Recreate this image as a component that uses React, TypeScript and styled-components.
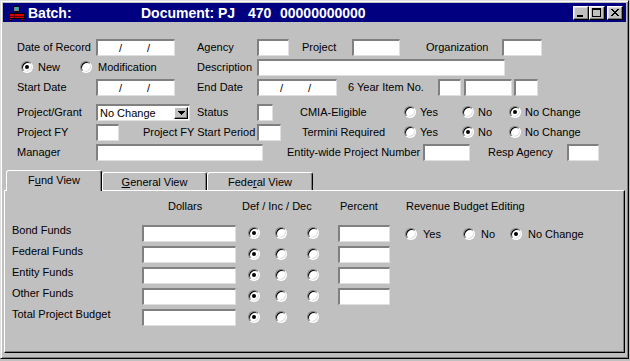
import React from 'react';
import styled, { createGlobalStyle, css } from 'styled-components';

const GlobalStyle = createGlobalStyle`
  html, body {
    margin: 0;
    padding: 0;
    background: #c0c0c0;
  }
  body {
    font-family: "Liberation Sans", Arial, sans-serif;
    font-size: 11px;
    color: #000;
  }
`;

const Window = styled.div`
  box-sizing: border-box;
  width: 629px;
  height: 359px;
  background: #c0c0c0;
  border: 1px solid;
  border-color: #dfdfdf #000 #000 #dfdfdf;
  box-shadow: inset 1px 1px #fff, inset -1px -1px #808080;
  padding: 2px;
  display: flex;
  flex-direction: column;
`;

const TitleBar = styled.div`
  height: 19px;
  flex: none;
  background: #000080;
  color: #fff;
  display: flex;
  align-items: center;
  padding: 0 3px 0 3px;
`;

const TitleSeg = styled.span<{ $w?: number }>`
  font-size: 14px;
  font-weight: bold;
  white-space: nowrap;
  width: ${({ $w }) => ($w ? `${$w}px` : 'auto')};
  flex: none;
`;

const TitleButtons = styled.div`
  margin-left: auto;
  display: flex;
  align-items: center;
`;

const WinButton = styled.span<{ $ml?: number }>`
  box-sizing: border-box;
  width: 16px;
  height: 14px;
  margin-left: ${({ $ml }) => $ml ?? 0}px;
  background: #c0c0c0;
  border: 1px solid;
  border-color: #fff #000 #000 #fff;
  box-shadow: inset -1px -1px #808080, inset 1px 1px #dfdfdf;
  display: flex;
  svg {
    display: block;
  }
`;

const Form = styled.div`
  padding: 15px 0 0 14px;
`;

const Row = styled.div<{ $mt?: number }>`
  display: flex;
  align-items: center;
  height: 20px;
  margin-top: ${({ $mt }) => $mt ?? 0}px;
`;

const Label = styled.span<{ $w: number; $ml?: number; $mb?: number }>`
  flex: none;
  width: ${({ $w }) => $w}px;
  margin-left: ${({ $ml }) => $ml ?? 0}px;
  margin-bottom: ${({ $mb }) => $mb ?? 0}px;
  white-space: nowrap;
`;

const Field = styled.div<{ $w: number; $ml?: number }>`
  box-sizing: border-box;
  flex: none;
  width: ${({ $w }) => $w}px;
  height: 17px;
  margin-left: ${({ $ml }) => $ml ?? 0}px;
  background: #fff;
  border-top: 2px solid #808080;
  border-left: 2px solid #808080;
  border-right: 1px solid #dfdfdf;
  border-bottom: 1px solid #dfdfdf;
  display: flex;
  align-items: center;
  white-space: nowrap;
`;

const Slash = styled.span<{ $ml: number }>`
  margin-left: ${({ $ml }) => $ml}px;
`;

const SelectText = styled.span`
  padding-left: 2px;
`;

const DropButton = styled.span`
  box-sizing: border-box;
  margin-left: auto;
  margin-right: 1px;
  width: 14px;
  height: 12px;
  background: #c0c0c0;
  border: 1px solid;
  border-color: #fff #000 #000 #fff;
  box-shadow: inset -1px -1px #808080;
  display: flex;
  align-items: center;
  justify-content: center;
`;

const RadioDot = styled.span<{ $on?: boolean }>`
  box-sizing: border-box;
  position: relative;
  flex: none;
  width: 12px;
  height: 12px;
  border-radius: 50%;
  background: #fff;
  border: 1px solid;
  border-color: #808080 #fff #fff #808080;
  box-shadow: inset 1px 1px #000, inset -1px -1px #dfdfdf;
  ${({ $on }) =>
    $on &&
    css`
      &::after {
        content: '';
        position: absolute;
        left: 3px;
        top: 3px;
        width: 4px;
        height: 4px;
        border-radius: 50%;
        background: #000;
      }
    `}
`;

const RadioOption = styled.span<{ $w?: number; $ml?: number; $gap?: number; $mb?: number }>`
  flex: none;
  display: flex;
  align-items: center;
  gap: ${({ $gap }) => $gap ?? 6}px;
  width: ${({ $w }) => ($w ? `${$w}px` : 'auto')};
  margin-left: ${({ $ml }) => $ml ?? 0}px;
  margin-bottom: ${({ $mb }) => $mb ?? 0}px;
  white-space: nowrap;
`;

const TabSection = styled.div`
  flex: 1;
  display: flex;
  flex-direction: column;
  margin: 8px 1px 3px 1px;
`;

const TabStrip = styled.div`
  display: flex;
  align-items: flex-end;
  height: 20px;
  padding-left: 2px;
  position: relative;
  z-index: 1;
`;

const Tab = styled.div<{ $w: number; $active?: boolean }>`
  box-sizing: border-box;
  flex: none;
  width: ${({ $w }) => $w}px;
  height: ${({ $active }) => ($active ? 21 : 18)}px;
  margin-bottom: ${({ $active }) => ($active ? -1 : 0)}px;
  background: #c0c0c0;
  border-top: 1px solid #fff;
  border-left: 1px solid #fff;
  border-right: 1px solid #000;
  border-radius: 3px 3px 0 0;
  box-shadow: inset -1px 0 #808080;
  display: flex;
  align-items: center;
  justify-content: center;
  padding-bottom: ${({ $active }) => ($active ? 2 : 0)}px;
`;

const Panel = styled.div`
  flex: 1;
  background: #c0c0c0;
  border-top: 1px solid #fff;
  border-left: 1px solid #fff;
  border-right: 1px solid #000;
  border-bottom: 1px solid #000;
  box-shadow: inset -1px -1px #808080;
  padding: 7px 0 0 7px;
`;

const PanelHeader = styled.div`
  display: flex;
  align-items: center;
  height: 16px;
  margin-bottom: 9px;
`;

const HeadCell = styled.span<{ $w?: number }>`
  flex: none;
  width: ${({ $w }) => ($w ? `${$w}px` : 'auto')};
  white-space: nowrap;
`;

const FundRow = styled.div`
  display: flex;
  align-items: center;
  height: 21px;
`;

function AppIcon() {
  return (
    <svg width="16" height="16" viewBox="0 0 16 16" shapeRendering="crispEdges" style={{ marginLeft: 3, flex: 'none' }}>
      <rect x="4" y="1" width="7" height="6" fill="#000" />
      <rect x="5" y="2" width="5" height="4" fill="#808080" />
      <rect x="6" y="2" width="3" height="3" fill="#00c0c0" />
      <rect x="6" y="7" width="3" height="1" fill="#000" />
      <rect x="0" y="8" width="16" height="6" fill="#000" />
      <rect x="1" y="9" width="14" height="4" fill="#e00000" />
      <rect x="1" y="11" width="14" height="1" fill="#600000" />
      <rect x="5" y="9" width="1" height="4" fill="#600000" />
      <rect x="10" y="9" width="1" height="4" fill="#600000" />
      <rect x="1" y="14" width="2" height="2" fill="#000" />
      <rect x="13" y="14" width="2" height="2" fill="#000" />
      <rect x="1" y="14" width="1" height="1" fill="#e00000" />
      <rect x="13" y="14" width="1" height="1" fill="#e00000" />
    </svg>
  );
}

function MinIcon() {
  return (
    <svg width="14" height="12" viewBox="0 0 14 12" shapeRendering="crispEdges">
      <rect x="3" y="8" width="6" height="2" fill="#000" />
    </svg>
  );
}

function MaxIcon() {
  return (
    <svg width="14" height="12" viewBox="0 0 14 12" shapeRendering="crispEdges">
      <rect x="2.5" y="1.5" width="8" height="8" fill="none" stroke="#000" />
      <rect x="2" y="2" width="9" height="1" fill="#000" />
    </svg>
  );
}

function CloseIcon() {
  const cells = [0, 1, 2, 3, 4, 5, 6];
  return (
    <svg width="14" height="12" viewBox="0 0 14 12" shapeRendering="crispEdges">
      {cells.map((i) => (
        <React.Fragment key={i}>
          <rect x={3 + i} y={2 + i} width="2" height="1" fill="#000" />
          <rect x={9 - i} y={2 + i} width="2" height="1" fill="#000" />
        </React.Fragment>
      ))}
    </svg>
  );
}

function DownArrow() {
  return (
    <svg width="7" height="4" viewBox="0 0 7 4" shapeRendering="crispEdges">
      <path d="M0 0h7v1H0zM1 1h5v1H1zM2 2h3v1H2zM3 3h1v1H3z" fill="#000" />
    </svg>
  );
}

function DateField({ w }: { w: number }) {
  return (
    <Field $w={w}>
      <Slash $ml={21}>/</Slash>
      <Slash $ml={25}>/</Slash>
    </Field>
  );
}

function Radio({ label, on, w, ml, gap, mb }: { label: string; on?: boolean; w?: number; ml?: number; gap?: number; mb?: number }) {
  return (
    <RadioOption $w={w} $ml={ml} $gap={gap} $mb={mb}>
      <RadioDot $on={on} />
      {label}
    </RadioOption>
  );
}

function YesNoChange({ value, gap = 6, ml = 0 }: { value: 'yes' | 'no' | 'nc'; gap?: number; ml?: number }) {
  return (
    <>
      <Radio label="Yes" on={value === 'yes'} w={58} gap={gap} ml={ml} />
      <Radio label="No" on={value === 'no'} w={47} gap={gap} />
      <Radio label="No Change" on={value === 'nc'} gap={gap} />
    </>
  );
}

const funds = ['Bond Funds', 'Federal Funds', 'Entity Funds', 'Other Funds', 'Total Project Budget'];

export default function App() {
  return (
    <>
      <GlobalStyle />
      <Window>
        <TitleBar>
          <AppIcon />
          <TitleSeg $w={113} style={{ marginLeft: 3 }}>Batch:</TitleSeg>
          <TitleSeg $w={77}>Document:</TitleSeg>
          <TitleSeg $w={30}>PJ</TitleSeg>
          <TitleSeg $w={32}>470</TitleSeg>
          <TitleSeg>00000000000</TitleSeg>
          <TitleButtons>
            <WinButton><MinIcon /></WinButton>
            <WinButton><MaxIcon /></WinButton>
            <WinButton $ml={2}><CloseIcon /></WinButton>
          </TitleButtons>
        </TitleBar>

        <Form>
          <Row>
            <Label $w={79}>Date of Record</Label>
            <DateField w={79} />
            <Label $w={60} $ml={22}>Agency</Label>
            <Field $w={32} />
            <Label $w={50} $ml={13}>Project</Label>
            <Field $w={48} />
            <Label $w={76} $ml={26}>Organization</Label>
            <Field $w={40} />
          </Row>
          <Row>
            <Radio label="New" on w={59} ml={4} gap={5} />
            <Radio label="Modification" w={117} gap={6} />
            <Label $w={60}>Description</Label>
            <Field $w={248} />
          </Row>
          <Row>
            <Label $w={79}>Start Date</Label>
            <DateField w={79} />
            <Label $w={60} $ml={22}>End Date</Label>
            <DateField w={80} />
            <Label $w={90} $ml={11}>6 Year Item No.</Label>
            <Field $w={23} />
            <Field $w={48} $ml={3} />
            <Field $w={24} $ml={2} />
          </Row>

          <Row $mt={5}>
            <Label $w={79}>Project/Grant</Label>
            <Field $w={94}>
              <SelectText>No Change</SelectText>
              <DropButton><DownArrow /></DropButton>
            </Field>
            <Label $w={60} $ml={7}>Status</Label>
            <Field $w={16} />
            <Label $w={104} $ml={27}>CMIA-Eligible</Label>
            <YesNoChange value="nc" gap={4} />
          </Row>
          <Row>
            <Label $w={79}>Project FY</Label>
            <Field $w={23} />
            <Label $w={114} $ml={24}>Project FY Start Period</Label>
            <Field $w={24} />
            <Label $w={102} $ml={21}>Termini Required</Label>
            <YesNoChange value="no" gap={4} />
          </Row>
          <Row>
            <Label $w={79}>Manager</Label>
            <Field $w={167} />
            <Label $w={136} $ml={24}>Entity-wide Project Number</Label>
            <Field $w={47} />
            <Label $w={79} $ml={18}>Resp Agency</Label>
            <Field $w={32} />
          </Row>
        </Form>

        <TabSection>
          <TabStrip>
            <Tab $w={96} $active>
              <span>F<u>u</u>nd View</span>
            </Tab>
            <Tab $w={105}>
              <span><u>G</u>eneral View</span>
            </Tab>
            <Tab $w={106}>
              <span>Fede<u>r</u>al View</span>
            </Tab>
          </TabStrip>
          <Panel>
            <PanelHeader>
              <HeadCell $w={156} />
              <HeadCell $w={74}>Dollars</HeadCell>
              <HeadCell $w={98}>Def / Inc / Dec</HeadCell>
              <HeadCell $w={66}>Percent</HeadCell>
              <HeadCell>Revenue Budget Editing</HeadCell>
            </PanelHeader>
            {funds.map((name, i) => (
              <FundRow key={name}>
                <Label $w={130} $mb={7}>{name}</Label>
                <Field $w={94} />
                <Radio label="" on w={12} ml={12} gap={0} mb={2} />
                <Radio label="" w={12} ml={15} gap={0} mb={2} />
                <Radio label="" w={12} ml={20} gap={0} mb={2} />
                {i < 4 && <Field $w={52} $ml={19} />}
                {i === 0 && <YesNoChange value="nc" ml={15} />}
              </FundRow>
            ))}
          </Panel>
        </TabSection>
      </Window>
    </>
  );
}
